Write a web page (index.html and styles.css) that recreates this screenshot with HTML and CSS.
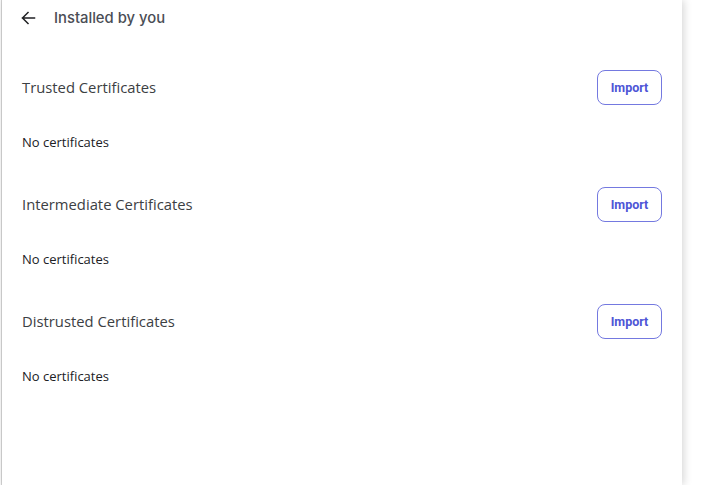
FILE: index.html
```html
<!DOCTYPE html>
<html>
<head>
<meta charset="utf-8">
<link rel="stylesheet" href="styles.css">
</head>
<body>
<div class="card">
  <div class="header">
    <svg class="back" width="16" height="16" viewBox="0 0 16 16"><path d="M14.5 8H2.5M8 2.5L2.5 8 8 13.5" fill="none" stroke="#202124" stroke-width="1.5" stroke-linecap="square"/></svg>
    <span class="title">Installed by you</span>
  </div>
  <div class="section">
    <div class="row"><span class="name">Trusted Certificates</span><button class="btn">Import</button></div>
    <div class="empty">No certificates</div>
  </div>
  <div class="section">
    <div class="row"><span class="name">Intermediate Certificates</span><button class="btn">Import</button></div>
    <div class="empty">No certificates</div>
  </div>
  <div class="section">
    <div class="row"><span class="name">Distrusted Certificates</span><button class="btn">Import</button></div>
    <div class="empty">No certificates</div>
  </div>
</div>
</body>
</html>
```
FILE: styles.css
```css
html, body { margin: 0; padding: 0; background: #fff; }
body { width: 713px; height: 485px; overflow: hidden; }
.card {
  margin-left: 2px;
  width: 680px;
  height: 485px;
  background: #fff;
  box-shadow: -1px 0 1px rgba(0,0,0,0.18), 2px 0 8px rgba(0,0,0,0.16);
  box-sizing: border-box;
  padding: 0 20px 0 20px;
}
.header { height: 35px; display: flex; align-items: center; }
.back { margin-left: -2px; margin-right: 18px; }
.title { font-family: "Inter", sans-serif; font-size: 14.8px; color: #4a4d55; font-weight: 500; }
.section { margin-top: 35px; }
.row { height: 35px; display: flex; align-items: center; justify-content: space-between; }
.name { font-family: "Open Sans", sans-serif; font-size: 14.8px; line-height: 20px; margin-bottom: 2px; color: #3c4043; }
.btn {
  width: 65px; height: 35px; box-sizing: border-box;
  border: 1px solid #7479e0; border-radius: 8px; background: #fff;
  font-family: "Roboto", sans-serif; font-weight: 700; font-size: 12.5px; color: #4e55d6;
  padding: 0; cursor: pointer;
}
.empty { margin-top: 27px; height: 20px; line-height: 20px; font-family: "Open Sans", sans-serif; font-size: 13px; color: #202124; }
.section + .section { margin-top: 35px; }
```
